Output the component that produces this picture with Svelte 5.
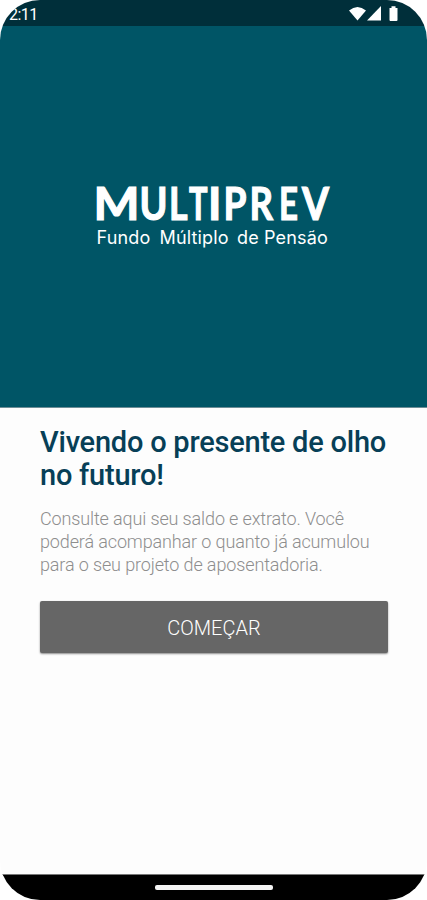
<script>
  const time = '2:11';
  const letters = [
    { char: 'M', x: -1.5, width: 46 },
    { char: 'U', x: 44.5, width: 28 },
    { char: 'L', x: 74, width: 18.5 },
    { char: 'T', x: 94, width: 18.5 },
    { char: 'I', x: 113, width: 13.4 },
    { char: 'P', x: 128.5, width: 23 },
    { char: 'R', x: 154.5, width: 23.5 },
    { char: 'E', x: 184, width: 19 },
    { char: 'V', x: 207, width: 27 }
  ];
  const description = [
    'Consulte aqui seu saldo e extrato. Você',
    'poderá acompanhar o quanto já acumulou',
    'para o seu projeto de aposentadoria.'
  ];
</script>

<main class="phone">
  <header class="status">
    <span class="time">{time}</span>
    <svg class="icons" width="50" height="18" viewBox="0 0 50 18" aria-hidden="true">
      <path d="M0 5.4Q8.500 -1.600 17 5.400L8.500 15.500Z" />
      <path d="M32 1V15.500H18Z" />
      <path d="M40.500 3h2V1.200h4V3h2v12q0 1-1 1h-6q-1 0-1-1Z" />
    </svg>
  </header>

  <section class="hero">
    <svg class="logo" width="237" height="68" viewBox="0 0 237 68">
      <text class="name" y="38">{#each letters as letter}<tspan x={letter.x} textLength={letter.width} lengthAdjust="spacingAndGlyphs">{letter.char}</tspan>{/each}</text>
      <text class="tagline" y="62"><tspan x="1.5">Fundo </tspan><tspan x="64.5">Múltiplo </tspan><tspan x="142">de </tspan><tspan x="169">Pensão</tspan></text>
    </svg>
  </section>

  <section class="content">
    <h1>Vivendo o presente de olho<br />no futuro!</h1>
    <p>
      {#each description as line}
        <span>{line}</span>
      {/each}
    </p>
    <button>COMEÇAR</button>
  </section>

  <footer class="navbar">
    <div class="handle"></div>
  </footer>
</main>

<style>
  :global(body) {
    background: #fff;
  }

  .phone {
    display: flex;
    flex-direction: column;
    width: 427px;
    height: 900px;
    border-radius: 40px;
    overflow: hidden;
    background: #fdfdfd;
    font-family: Roboto, sans-serif;
  }

  .status {
    display: flex;
    justify-content: space-between;
    box-sizing: border-box;
    height: 26px;
    padding: 5px 28px 0 9px;
    background: #002f3a;
    color: #fff;
  }

  .time {
    font-size: 16px;
    line-height: 19px;
    letter-spacing: -0.5px;
  }

  .icons {
    fill: #fff;
  }

  .hero {
    display: flex;
    justify-content: center;
    box-sizing: border-box;
    height: 382px;
    padding-top: 156px;
    background: #005566;
    border-bottom: 1px solid #6d8d96;
  }

  .logo {
    fill: #fff;
    overflow: visible;
  }

  .name {
    font-family: Lato, sans-serif;
    font-size: 45px;
    font-weight: 700;
    stroke: #fff;
    stroke-width: 1.2px;
  }

  .tagline {
    font-family: Inter, sans-serif;
    font-size: 18px;
    letter-spacing: 0.15px;
  }

  .content {
    flex: 1;
    padding: 18px 39px 0 40px;
  }

  h1 {
    margin: 0;
    color: #073f57;
    font-size: 29px;
    font-weight: 500;
    line-height: 33px;
    letter-spacing: -0.23px;
    white-space: nowrap;
  }

  p {
    margin: 15px 0 25px;
    color: #8e8e8e;
    font-size: 18px;
    font-weight: 300;
    line-height: 23px;
    letter-spacing: -0.13px;
  }

  p span {
    display: block;
    white-space: nowrap;
  }

  button {
    display: block;
    width: 348px;
    height: 52px;
    padding: 2px 0 0;
    border: none;
    border-radius: 2px;
    background: #666;
    box-shadow: 0 1px 2px rgba(0, 0, 0, 0.45);
    color: #fff;
    font-family: Roboto, sans-serif;
    font-size: 20px;
    font-weight: 300;
  }

  .navbar {
    display: flex;
    justify-content: center;
    box-sizing: border-box;
    height: 26px;
    padding-top: 10px;
    border-top: 1px solid #777;
    background: #000;
  }

  .handle {
    width: 118px;
    height: 5px;
    border-radius: 2px;
    background: #f5f5f5;
  }
</style>
